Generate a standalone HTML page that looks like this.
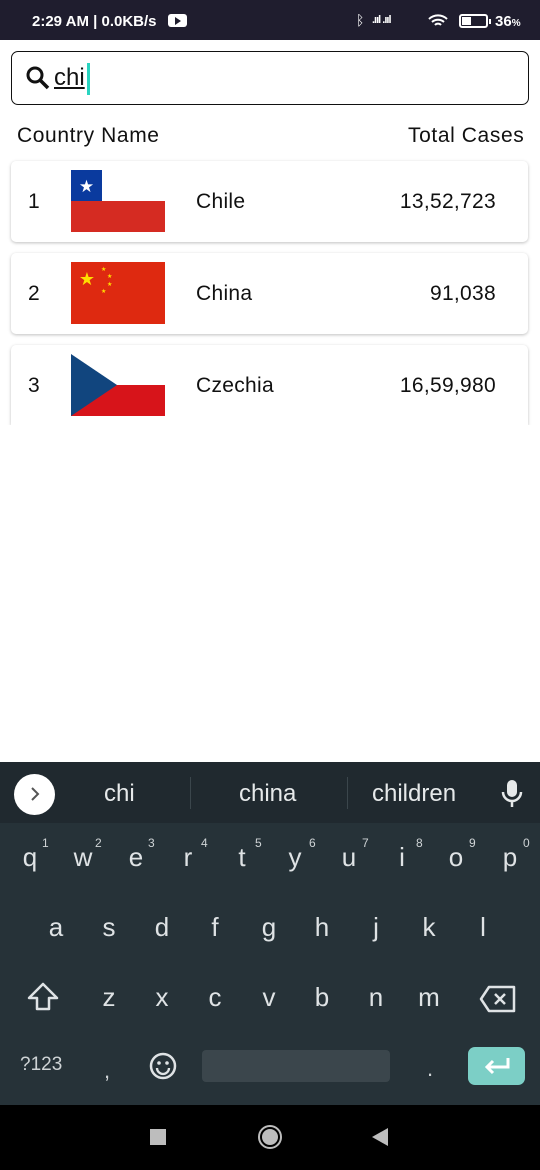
<!DOCTYPE html>
<html><head><meta charset="utf-8"><style>
*{margin:0;padding:0;box-sizing:border-box}
body{width:540px;height:1170px;position:relative;background:#fff;font-family:"Liberation Sans",Roboto,sans-serif;overflow:hidden}
.a{position:absolute}
.sb{left:0;top:0;width:540px;height:40px;background:#1f1d2e;color:#fff;font-size:15px;font-weight:bold}
.card{left:11px;width:517px;height:81px;background:#fff;border-radius:5px;box-shadow:0 1px 3px rgba(0,0,0,.25)}
.card span{position:absolute;top:0;line-height:81px;font-size:21px;color:#111;letter-spacing:0.3px}
.k{position:absolute;color:#dfe3e5;font-size:26px;width:40px;text-align:center;transform:translateX(-20px)}
.n{position:absolute;color:#cfd4d6;font-size:12px}
</style></head><body>
<div class="a sb">
 <span class="a" style="left:32px;top:13px">2:29 AM | 0.0KB/s</span>
 <span class="a" style="left:168px;top:14px;width:19px;height:13px;background:#fff;border-radius:3px"></span>
 <span class="a" style="left:175px;top:17px;width:0;height:0;border-left:6px solid #1f1d2e;border-top:4px solid transparent;border-bottom:4px solid transparent"></span>
 <span class="a" style="left:356px;top:12px;font-weight:normal;font-size:14px">ᛒ</span>
 <span class="a" style="left:372px;top:14px;font-size:11px;letter-spacing:-1px">.ııl .ııl</span>
 <svg class="a" style="left:428px;top:14px" width="20" height="14" viewBox="0 0 20 14"><path d="M1 5a13 13 0 0 1 18 0M4 8a9 9 0 0 1 12 0M7 11a4 4 0 0 1 6 0" stroke="#fff" stroke-width="2" fill="none"/></svg>
 <span class="a" style="left:459px;top:14px;width:29px;height:14px;border:2px solid #fff;border-radius:3px"></span>
 <span class="a" style="left:462px;top:17px;width:9px;height:8px;background:#fff"></span>
 <span class="a" style="left:489px;top:19px;width:2px;height:5px;background:#fff"></span>
 <span class="a" style="left:495px;top:13px">36<small style="font-size:10px">%</small></span>
</div>
<div class="a" style="left:11px;top:51px;width:518px;height:54px;border:1.5px solid #111;border-radius:7px"></div>
<svg class="a" style="left:25px;top:65px" width="26" height="26" viewBox="0 0 26 26"><circle cx="10" cy="10" r="7" stroke="#111" stroke-width="3" fill="none"/><path d="M15 15l8 8" stroke="#111" stroke-width="3.5"/></svg>
<span class="a" style="left:54px;top:64px;font-size:24px;color:#111;text-decoration:underline">chi</span>
<span class="a" style="left:87px;top:63px;width:3px;height:32px;background:#2ad4c0"></span>
<span class="a" style="left:17px;top:124px;font-size:21px;color:#111;letter-spacing:0.6px">Country Name</span>
<span class="a" style="left:408px;top:124px;font-size:21px;color:#111;letter-spacing:0.6px">Total Cases</span>

<div class="a card" style="top:161px"><span style="left:17px">1</span>
 <svg class="a" style="left:60px;top:9px" width="94" height="62" viewBox="0 0 94 62"><rect width="94" height="31" fill="#fff"/><rect y="31" width="94" height="31" fill="#d52b22"/><rect width="31" height="31" fill="#0a3a9e"/><text x="15.5" y="22" font-size="17" fill="#fff" text-anchor="middle">★</text></svg>
 <span style="left:185px">Chile</span><span style="right:32px">13,52,723</span></div>
<div class="a card" style="top:253px"><span style="left:17px">2</span>
 <svg class="a" style="left:60px;top:9px" width="94" height="62" viewBox="0 0 94 62"><rect width="94" height="62" fill="#de2910"/><text x="16" y="23" font-size="18" fill="#ffde00" text-anchor="middle">★</text><g font-size="6" fill="#ffde00"><text x="30" y="9">★</text><text x="36" y="16">★</text><text x="36" y="24">★</text><text x="30" y="31">★</text></g></svg>
 <span style="left:185px">China</span><span style="right:32px">91,038</span></div>
<div class="a card" style="top:345px;height:80px;border-radius:5px 5px 0 0"><span style="left:17px">3</span>
 <svg class="a" style="left:60px;top:9px" width="94" height="62" viewBox="0 0 94 62"><rect width="94" height="31" fill="#fff"/><rect y="31" width="94" height="31" fill="#d7141a"/><path d="M0 0L46 31L0 62Z" fill="#11457e"/></svg>
 <span style="left:185px">Czechia</span><span style="right:32px">16,59,980</span></div>
<div class="a" style="left:0;top:425px;width:540px;height:10px;background:#fff"></div>

<div class="a" style="left:0;top:762px;width:540px;height:343px;background:#263238"></div>
<div class="a" style="left:0;top:762px;width:540px;height:61px;background:#20292f"></div>
<div class="a" style="left:14px;top:774px;width:41px;height:41px;border-radius:50%;background:#fff"></div>
<svg class="a" style="left:28px;top:786px" width="14" height="16"><path d="M4 2l6 6-6 6" stroke="#555" stroke-width="2" fill="none"/></svg>
<span class="a" style="left:104px;top:780px;font-size:24px;color:#e6e9ea">chi</span>
<span class="a" style="left:190px;top:777px;width:1px;height:32px;background:#3b464c"></span>
<span class="a" style="left:239px;top:780px;font-size:24px;color:#e6e9ea">china</span>
<span class="a" style="left:347px;top:777px;width:1px;height:32px;background:#3b464c"></span>
<span class="a" style="left:372px;top:780px;font-size:24px;color:#e6e9ea">children</span>
<svg class="a" style="left:500px;top:779px" width="24" height="30" viewBox="0 0 24 30"><rect x="7" y="1" width="10" height="17" rx="5" fill="#e6e9ea"/><path d="M3 13a9 9 0 0 0 18 0M12 22v6" stroke="#e6e9ea" stroke-width="2.5" fill="none"/></svg>

<div class="k" style="left:30px;top:842px">q</div><div class="k" style="left:83px;top:842px">w</div><div class="k" style="left:136px;top:842px">e</div><div class="k" style="left:188px;top:842px">r</div><div class="k" style="left:242px;top:842px">t</div><div class="k" style="left:295px;top:842px">y</div><div class="k" style="left:349px;top:842px">u</div><div class="k" style="left:402px;top:842px">i</div><div class="k" style="left:456px;top:842px">o</div><div class="k" style="left:510px;top:842px">p</div>
<div class="n" style="left:42px;top:836px">1</div><div class="n" style="left:95px;top:836px">2</div><div class="n" style="left:148px;top:836px">3</div><div class="n" style="left:201px;top:836px">4</div><div class="n" style="left:255px;top:836px">5</div><div class="n" style="left:309px;top:836px">6</div><div class="n" style="left:362px;top:836px">7</div><div class="n" style="left:416px;top:836px">8</div><div class="n" style="left:469px;top:836px">9</div><div class="n" style="left:523px;top:836px">0</div>
<div class="k" style="left:56px;top:912px">a</div><div class="k" style="left:109px;top:912px">s</div><div class="k" style="left:162px;top:912px">d</div><div class="k" style="left:215px;top:912px">f</div><div class="k" style="left:269px;top:912px">g</div><div class="k" style="left:322px;top:912px">h</div><div class="k" style="left:376px;top:912px">j</div><div class="k" style="left:429px;top:912px">k</div><div class="k" style="left:483px;top:912px">l</div>
<svg class="a" style="left:26px;top:982px" width="34" height="30" viewBox="0 0 34 30"><path d="M17 2L3 16h8v11h12V16h8Z" stroke="#dfe3e5" stroke-width="2.5" fill="none" stroke-linejoin="round"/></svg>
<div class="k" style="left:109px;top:982px">z</div><div class="k" style="left:162px;top:982px">x</div><div class="k" style="left:215px;top:982px">c</div><div class="k" style="left:269px;top:982px">v</div><div class="k" style="left:322px;top:982px">b</div><div class="k" style="left:376px;top:982px">n</div><div class="k" style="left:429px;top:982px">m</div>
<svg class="a" style="left:479px;top:985px" width="38" height="28" viewBox="0 0 38 28"><path d="M10 2h25v24H10L2 14Z" stroke="#dfe3e5" stroke-width="2.5" fill="none" stroke-linejoin="round"/><path d="M16 9l10 10M26 9L16 19" stroke="#dfe3e5" stroke-width="2.5"/></svg>
<span class="a" style="left:20px;top:1054px;font-size:19px;color:#cfd4d6">?123</span>
<span class="a" style="left:104px;top:1058px;font-size:22px;color:#cfd4d6">,</span>
<svg class="a" style="left:148px;top:1051px" width="30" height="30" viewBox="0 0 30 30"><circle cx="15" cy="15" r="12" stroke="#dfe3e5" stroke-width="2.5" fill="none"/><circle cx="11" cy="12" r="1.8" fill="#dfe3e5"/><circle cx="19" cy="12" r="1.8" fill="#dfe3e5"/><path d="M9 17a6 6 0 0 0 12 0" stroke="#dfe3e5" stroke-width="2.3" fill="none"/></svg>
<div class="a" style="left:202px;top:1050px;width:188px;height:32px;background:#3b464c;border-radius:4px"></div>
<span class="a" style="left:427px;top:1056px;font-size:22px;color:#cfd4d6">.</span>
<div class="a" style="left:468px;top:1047px;width:57px;height:38px;background:#7ccfc6;border-radius:7px"></div>
<svg class="a" style="left:482px;top:1054px" width="30" height="24" viewBox="0 0 30 24"><path d="M26 4v9H5M11 7l-6 6 6 6" stroke="#fff" stroke-width="3" fill="none"/></svg>

<div class="a" style="left:0;top:1105px;width:540px;height:65px;background:#000"></div>
<div class="a" style="left:150px;top:1129px;width:16px;height:16px;background:#bdbdbd"></div>
<div class="a" style="left:258px;top:1125px;width:24px;height:24px;border:2px solid #bdbdbd;border-radius:50%"></div>
<div class="a" style="left:262px;top:1129px;width:16px;height:16px;background:#bdbdbd;border-radius:50%"></div>
<div class="a" style="left:372px;top:1128px;width:0;height:0;border-right:16px solid #bdbdbd;border-top:9px solid transparent;border-bottom:9px solid transparent"></div>
</body></html>
